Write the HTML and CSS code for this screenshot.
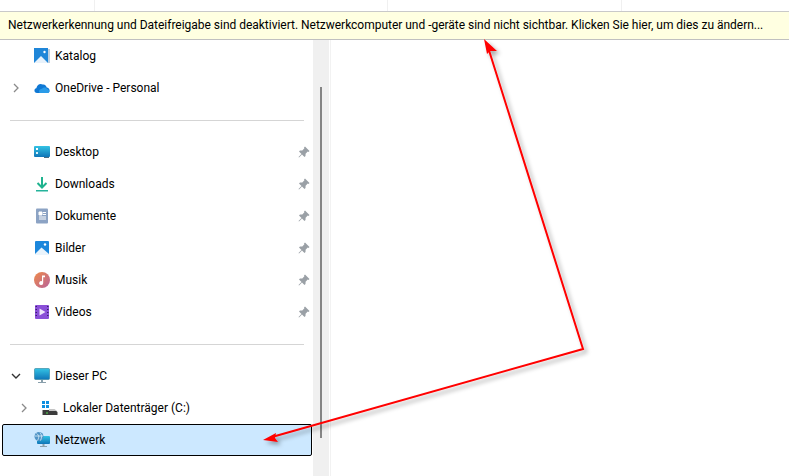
FILE: index.html
```html
<!DOCTYPE html>
<html lang="de">
<head>
    <meta charset="utf-8">
    <title>Netzwerk</title>
    <link rel="stylesheet" href="styles.css">
</head>
<body>
    <svg class="defs" width="0" height="0">
        <defs>
            <linearGradient id="screen" x1="0" y1="0" x2="0" y2="1"><stop offset="0" stop-color="#34c3e4"/><stop offset="1" stop-color="#0f75b8"/></linearGradient>
            <linearGradient id="music" x1="0" y1="0" x2="1" y2="1"><stop offset="0" stop-color="#ef8a48"/><stop offset="1" stop-color="#b8639c"/></linearGradient>
            <symbol id="pin" viewBox="0 0 12 12"><path d="M7 0.5 L11.5 5 L10.5 6 L9.7 5.6 L7.6 7.7 L7.5 10 L6.5 11 L4 8.5 L1 11.5 L0.5 11 L3.5 8 L1 5.5 L2 4.5 L4.3 4.4 L6.4 2.3 L6 1.5 Z" fill="#9aa0a6"/></symbol>
            <symbol id="chev-right" viewBox="0 0 8 10"><path d="M2 1 L6 5 L2 9" fill="none" stroke="#8a8a8a" stroke-width="1.3"/></symbol>
        </defs>
    </svg>
    <div class="window">
        <div class="header">
            <div class="col col-a"></div>
            <div class="col col-b"></div>
            <div class="col col-c"></div>
        </div>
        <div class="infobar">Netzwerkerkennung und Dateifreigabe sind deaktiviert. Netzwerkcomputer und -geräte sind nicht sichtbar. Klicken Sie hier, um dies zu ändern...</div>
        <div class="content">
            <nav class="sidebar">
                <div class="row">
                    <span class="chev"></span>
                    <svg class="icon" viewBox="0 0 16 16"><rect x="0" y="0" width="14" height="15" fill="#1f86d8"/><rect x="14.5" y="1" width="1" height="14" fill="#7f9fc0"/><path d="M0 15 L7 8 L14 15 Z" fill="#e8f2fb"/><circle cx="10.5" cy="4" r="1.2" fill="#fff"/></svg>
                    <span class="label">Katalog</span>
                </div>
                <div class="row">
                    <span class="chev"><svg><use href="#chev-right"/></svg></span>
                    <svg class="icon" viewBox="0 0 16 16"><path d="M3 13 C0 13 -0.5 8.8 2.3 8.2 C3.2 4.6 6.2 3 8.8 4.6 C10.8 4.2 12.4 5.8 12.7 7.6 C15.4 7.6 17 11.8 14 13 Z" fill="#0f78d4"/><path d="M5.6 13 C4 10.8 6.2 8.8 8 8.8 C9.5 6.8 12.8 7.2 13 9 C15 9 16.4 12 14 13 Z" fill="#2a9be8"/></svg>
                    <span class="label">OneDrive - Personal</span>
                </div>
                <div class="divider"></div>
                <div class="row">
                    <span class="chev"></span>
                    <svg class="icon" viewBox="0 0 16 16"><rect x="0" y="2" width="16" height="11" rx="1" fill="url(#screen)"/><rect x="2" y="4" width="2" height="2" fill="#fff"/><rect x="2" y="8" width="2" height="2" fill="#d8f2fa"/><rect x="10" y="13" width="5" height="1" fill="#4a6b80"/></svg>
                    <span class="label">Desktop</span>
                    <svg class="pin"><use href="#pin"/></svg>
                </div>
                <div class="row">
                    <span class="chev"></span>
                    <svg class="icon" viewBox="0 0 16 16"><path d="M8 1 V11 M3.5 7 L8 11.5 L12.5 7" fill="none" stroke="#1fb38f" stroke-width="2"/><rect x="2" y="14" width="12" height="1.5" fill="#25b39b"/></svg>
                    <span class="label">Downloads</span>
                    <svg class="pin"><use href="#pin"/></svg>
                </div>
                <div class="row">
                    <span class="chev"></span>
                    <svg class="icon" viewBox="0 0 16 16"><rect x="2" y="0.5" width="12" height="15" rx="1" fill="#8ca3c4"/><path d="M5 4 H8 V7 H5 Z M9 4.5 H12 M9 6.5 H12 M5 9 H12 M5 11 H12" fill="#fff" stroke="#fff" stroke-width="1"/></svg>
                    <span class="label">Dokumente</span>
                    <svg class="pin"><use href="#pin"/></svg>
                </div>
                <div class="row">
                    <span class="chev"></span>
                    <svg class="icon" viewBox="0 0 16 16"><rect x="1" y="1" width="14" height="14" rx="1" fill="#1c87dc"/><path d="M1 14 L7.5 7.5 L15 14 V15 H1 Z" fill="#eaf4fc"/><circle cx="11" cy="4.5" r="1.2" fill="#fff"/></svg>
                    <span class="label">Bilder</span>
                    <svg class="pin"><use href="#pin"/></svg>
                </div>
                <div class="row">
                    <span class="chev"></span>
                    <svg class="icon" viewBox="0 0 16 16"><circle cx="8" cy="8" r="8" fill="url(#music)"/><path d="M8 3.5 H11 V5.2 H9.2 V11 A2 2 0 1 1 8 9.2 Z" fill="#fff"/></svg>
                    <span class="label">Musik</span>
                    <svg class="pin"><use href="#pin"/></svg>
                </div>
                <div class="row">
                    <span class="chev"></span>
                    <svg class="icon" viewBox="0 0 16 16"><rect x="1" y="1" width="14" height="14" rx="1" fill="#8a4fd8"/><path d="M1.5 2.5 H3 M1.5 5.5 H3 M1.5 8.5 H3 M1.5 11.5 H3 M13 2.5 H14.5 M13 5.5 H14.5 M13 8.5 H14.5 M13 11.5 H14.5" stroke="#3a1f70" stroke-width="1.2"/><path d="M5.5 4.5 L11.5 8 L5.5 11.5 Z" fill="#efe6fb"/></svg>
                    <span class="label">Videos</span>
                    <svg class="pin"><use href="#pin"/></svg>
                </div>
                <div class="divider"></div>
                <div class="row">
                    <span class="chev"><svg viewBox="0 0 10 8"><path d="M1 2 L5 6 L9 2" fill="none" stroke="#333" stroke-width="1.4"/></svg></span>
                    <svg class="icon" viewBox="0 0 16 16"><rect x="0.5" y="0.5" width="15" height="11" rx="1" fill="url(#screen)" stroke="#2c7f99" stroke-width="0.6"/><rect x="7" y="12" width="2" height="2" fill="#8aa0ac"/><rect x="4" y="14" width="8" height="1" fill="#8aa0ac"/></svg>
                    <span class="label">Dieser PC</span>
                </div>
                <div class="row row-sub">
                    <span class="chev"><svg><use href="#chev-right"/></svg></span>
                    <svg class="icon" viewBox="0 0 16 16"><path d="M0 1 H3 V4 H0 Z M4 1 H7 V4 H4 Z M0 5 H3 V8 H0 Z M4 5 H7 V8 H4 Z" fill="#0f8fe0"/><path d="M0.5 10 H13 L15.5 12 V15 H0.5 Z" fill="#3c3c3c"/><path d="M7 9 H12.5 L15 11 H7 Z" fill="#c4c4c4"/><rect x="4" y="12.5" width="2" height="1" fill="#4fe04f"/></svg>
                    <span class="label">Lokaler Datenträger (C:)</span>
                </div>
                <div class="row row-active">
                    <span class="chev"></span>
                    <svg class="icon" viewBox="0 0 16 16"><rect x="3" y="4" width="13" height="8" rx="1" fill="url(#screen)"/><circle cx="5" cy="4.5" r="4.5" fill="#4f93c6"/><path d="M2.5 1.5 C5 3 5.5 5 3.5 8.5 M6 0.5 C8 3 8 5.5 6.5 8.5 M0.8 4 H9" fill="none" stroke="#dceff9" stroke-width="0.8"/><rect x="8.5" y="12" width="2" height="2" fill="#8aa0ac"/><rect x="6" y="14" width="7" height="1" fill="#8aa0ac"/></svg>
                    <span class="label">Netzwerk</span>
                </div>
            </nav>
            <div class="scrollbar"><div class="thumb"></div></div>
            <main class="main"></main>
        </div>
    </div>

    <!-- red annotation drawn on top of the screenshot -->
    <svg class="annotation" width="789" height="476" viewBox="0 0 789 476">
        <defs>
            <filter id="shadow" x="-10%" y="-10%" width="120%" height="120%">
                <feDropShadow dx="3" dy="3" stdDeviation="2" flood-color="#000" flood-opacity="0.35"/>
            </filter>
        </defs>
        <g filter="url(#shadow)">
            <path d="M487 44 L583 349 L272 437" fill="none" stroke="#f00" stroke-width="2"/>
            <path d="M484 39 L497 51 L490 51 L487 54 Z" fill="#f00"/>
            <path d="M263 440 L276 433 L275 438 L278 442 Z" fill="#f00"/>
        </g>
    </svg>
</body>
</html>
```

FILE: styles.css
```css
body {
    margin: 0;
    background-color: #fff;
    font-family: Roboto, "Noto Sans", sans-serif;
    font-size: 12px;
    color: #000;
    overflow: hidden;
}
.defs {
    position: absolute;
}
.window {
    display: flex;
    flex-direction: column;
    height: 476px;
}
.header {
    display: flex;
    height: 11px;
}
.col {
    border-right: 1px solid #f0f0f0;
}
.col-a {
    width: 94px;
}
.col-b {
    width: 292px;
}
.col-c {
    width: 233px;
}
.infobar {
    height: 27px;
    line-height: 27px;
    padding-left: 8px;
    background-color: #ffffe1;
    border-top: 1px solid #c9c9c9;
    border-bottom: 1px solid #c0c0c0;
    letter-spacing: -0.02px;
    white-space: nowrap;
    overflow: hidden;
}
.content {
    display: flex;
    flex: 1;
    min-height: 0;
}
.sidebar {
    width: 313px;
    flex-shrink: 0;
}
.row {
    display: flex;
    align-items: center;
    height: 32px;
    padding-left: 4px;
    box-sizing: border-box;
}
.row-sub {
    padding-left: 12px;
}
.row-active {
    margin: 0 1px 0 2px;
    padding-left: 1px;
    background-color: #cce8ff;
    border: 1px solid #000;
    border-radius: 2px;
}
.chev {
    display: flex;
    justify-content: center;
    align-items: center;
    width: 24px;
    flex-shrink: 0;
}
.chev svg {
    width: 10px;
    height: 10px;
}
.icon {
    width: 16px;
    height: 16px;
    margin-left: 6px;
    flex-shrink: 0;
}
.label {
    margin-left: 5px;
    flex: 1;
    white-space: nowrap;
}
.pin {
    width: 12px;
    height: 12px;
    margin-right: 3px;
}
.divider {
    height: 32px;
    margin: 0 9px 0 10px;
    display: flex;
    align-items: center;
}
.divider::after {
    content: "";
    display: block;
    width: 100%;
    height: 1px;
    background-color: #d5d5d5;
}
.scrollbar {
    width: 16px;
    flex-shrink: 0;
    background-color: #f0f0f0;
    padding-top: 47px;
    box-sizing: border-box;
    display: flex;
    justify-content: center;
}
.thumb {
    width: 2px;
    height: 351px;
    background-color: #858585;
}
.main {
    flex: 1;
    border-left: 1px solid #f2f2f2;
    margin-left: 1px;
}
.annotation {
    position: absolute;
    top: 0;
    left: 0;
    pointer-events: none;
}
```
